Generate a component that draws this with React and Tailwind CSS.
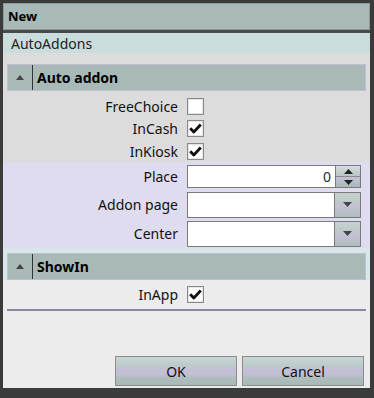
import React from "react";

const font = { fontFamily: '"Noto Sans", "Open Sans", sans-serif' };

function Check({ checked }) {
  return (
    <div className="w-[17px] h-[17px] border border-[#8a8a8a] bg-white flex items-center justify-center shadow-[inset_0_0_0_1px_#e4e4e4]">
      {checked && (
        <svg width="13" height="11" viewBox="0 0 13 11">
          <path d="M1.2 5.2 L4.8 9 L11.8 1.5" fill="none" stroke="#111" strokeWidth="2.8" strokeLinejoin="round" />
        </svg>
      )}
    </div>
  );
}

function Header({ title }) {
  return (
    <div className="mx-[4px] h-[27px] bg-[#a9b9b7] border border-[#bfbfd2] flex items-center">
      <div className="w-[24px] flex items-center justify-center">
        <svg width="8" height="5" viewBox="0 0 8 5"><path d="M0 5 L4 0 L8 5 Z" fill="#444" /></svg>
      </div>
      <div className="w-[1px] self-stretch bg-[#333]" />
      <div className="pl-[4px] text-[14px] font-bold text-black">{title}</div>
    </div>
  );
}

function Label({ children }) {
  return <div className="w-[178px] text-right pr-[3px] text-[14px] text-[#111]">{children}</div>;
}

function Combo() {
  return (
    <div className="w-[174px] h-[26px] border border-[#7a7a7a] bg-white flex">
      <div className="flex-1" />
      <div className="w-[26px] border-l border-[#7a7a7a] bg-[linear-gradient(#c6d2d2_0%,#bdc9c9_40%,#c4c0d6_55%,#aebebc_100%)] flex items-center justify-center">
        <svg width="9" height="5" viewBox="0 0 9 5"><path d="M0 0 L9 0 L4.5 5 Z" fill="#444" /></svg>
      </div>
    </div>
  );
}

function Btn({ children }) {
  return (
    <div className="w-[122px] h-[30px] border border-[#8c8c8c] bg-[linear-gradient(#c9d6d6_0%,#bccaca_30%,#c3bfd6_45%,#c3bfd6_62%,#adbdbb_75%,#a9b9b7_100%)] flex items-center justify-center text-[14px] text-[#111]">
      {children}
    </div>
  );
}

export default function App() {
  return (
    <div className="w-[374px] h-[398px] bg-[#3b3b3b] pt-[3px] pl-[3px] overflow-hidden" style={font}>
      <div className="w-[367px] h-[27px] bg-[#a9b9b7] border border-[#8c9a98] flex items-center pl-[4px] text-[13px] font-bold text-black">
        New
      </div>
      <div className="h-[3px] bg-[#4a4a4a] w-[367px]" />
      <div className="w-[367px] h-[355px] bg-[#ececec] flex flex-col">
        <div className="h-[20px] bg-[#cbdcdc] flex items-center pl-[8px] text-[14px] text-[#222]">AutoAddons</div>
        <div className="bg-[#dcdcdc] pt-[11px]">
          <Header title="Auto addon" />
          <div className="pt-[4px]">
            <div className="h-[22px] flex items-center">
              <Label>FreeChoice</Label>
              <div className="pl-[6px]"><Check /></div>
            </div>
            <div className="h-[23px] flex items-center">
              <Label>InCash</Label>
              <div className="pl-[6px]"><Check checked /></div>
            </div>
            <div className="h-[22px] flex items-center">
              <Label>InKiosk</Label>
              <div className="pl-[6px]"><Check checked /></div>
            </div>
          </div>
        </div>
        <div className="bg-[#dedcee] pt-[3px]">
          <div className="h-[23px] flex items-center">
            <Label>Place</Label>
            <div className="ml-[6px] w-[174px] h-[23px] border border-[#7a7a7a] bg-white flex">
              <div className="flex-1 flex items-center justify-end pr-[4px] text-[14px] text-[#2a2a3a]">0</div>
              <div className="w-[25px] border-l border-[#7a7a7a] flex flex-col">
                <div className="flex-1 bg-[linear-gradient(#d4dcdc,#b9c6c6)] border-b border-[#8a8a8a] flex items-center justify-center">
                  <svg width="9" height="5" viewBox="0 0 9 5"><path d="M0 5 L4.5 0 L9 5 Z" fill="#222" /></svg>
                </div>
                <div className="flex-1 bg-[linear-gradient(#c4c0d6,#a9b9b7)] flex items-center justify-center">
                  <svg width="9" height="5" viewBox="0 0 9 5"><path d="M0 0 L9 0 L4.5 5 Z" fill="#222" /></svg>
                </div>
              </div>
            </div>
          </div>
          <div className="h-[29px] mt-[2px] flex items-center">
            <Label>Addon page</Label>
            <div className="ml-[6px]"><Combo /></div>
          </div>
          <div className="h-[29px] flex items-center">
            <Label>Center</Label>
            <div className="ml-[6px]"><Combo /></div>
          </div>
        </div>
        <div className="bg-[#d8e8e8] pt-[5px]">
          <Header title="ShowIn" />
        </div>
        <div className="h-[29px] flex items-center bg-[#ececec]">
          <Label>InApp</Label>
          <div className="pl-[6px]"><Check checked /></div>
        </div>
        <div className="mx-[4px] h-[2px] bg-[#8a88a2]" />
        <div className="flex-1 flex items-end justify-end gap-[5px] pr-[6px] pb-[2px]">
          <Btn>OK</Btn>
          <Btn>Cancel</Btn>
        </div>
      </div>
    </div>
  );
}
